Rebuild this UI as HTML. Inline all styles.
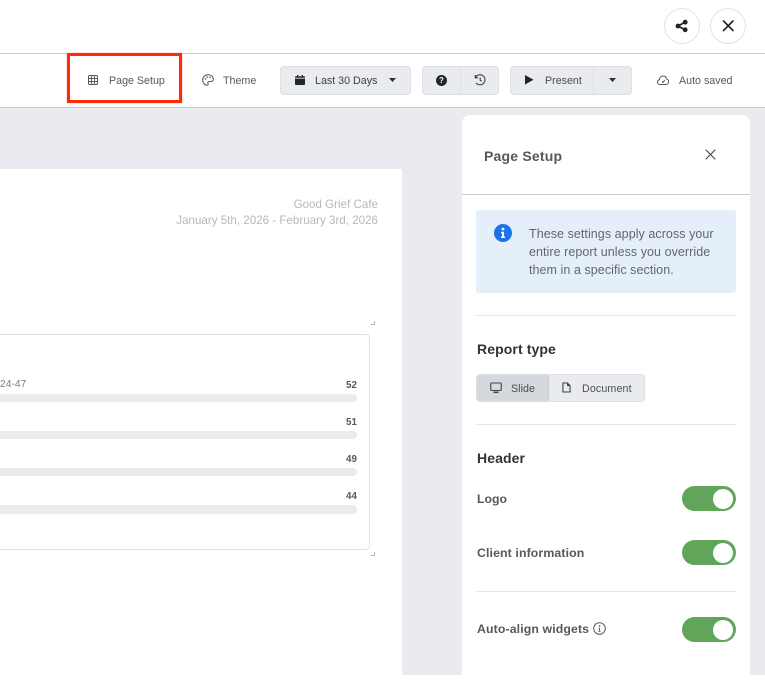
<!DOCTYPE html>
<html><head><meta charset="utf-8"><style>
html,body{margin:0;padding:0}
body{width:765px;height:675px;position:relative;overflow:hidden;background:#fff;font-family:"Liberation Sans",sans-serif;color:#55585c}
.a{position:absolute}
.t{position:absolute;white-space:nowrap;line-height:16px;font-size:10.700px;transform:translateY(-8px)}
.btn{position:absolute;top:66px;height:27px;background:#e9ebef;border:1px solid #dcdfe3;border-radius:4px}
.div{position:absolute;height:1px;background:#e4e6e9;left:476px;width:260px}
.tog{position:absolute;left:682px;width:54px;height:25px;border-radius:13px;background:#60a55a}
.tog:after{content:"";position:absolute;left:31px;top:3px;width:20px;height:20px;border-radius:50%;background:#fff}
.bar{position:absolute;left:0;width:357px;height:8.500px;background:#e9ebef;border-radius:0 5px 5px 0}
.b{font-weight:700}
svg{position:absolute;overflow:visible}
</style></head><body>
<div class="a" style="left:0;top:53px;width:765px;height:1px;background:#c9ccd0"></div>
<div class="a" style="left:0;top:107px;width:765px;height:1px;background:#c9ccd0"></div>
<div class="a" style="left:0;top:108px;width:765px;height:567px;background:#e9ebf0"></div>

<!-- top buttons -->
<div class="a" style="left:664px;top:8px;width:34px;height:34px;border:1px solid #e0e2e6;border-radius:50%"></div>
<div class="a" style="left:710px;top:8px;width:34px;height:34px;border:1px solid #e0e2e6;border-radius:50%"></div>
<svg style="left:675px;top:19px" width="14" height="14" viewBox="0 0 14 14"><path d="M10.500 3 3 7l7.500 4" fill="none" stroke="#1f2328" stroke-width="1.700"/><circle cx="10.200" cy="3.200" r="2.400" fill="#1f2328"/><circle cx="3" cy="7" r="2.400" fill="#1f2328"/><circle cx="10.200" cy="10.800" r="2.400" fill="#1f2328"/></svg>
<svg style="left:722px;top:20px" width="12" height="12" viewBox="0 0 12 12"><path d="M1.500 1 11 10.500M11 1 1.500 10.500" stroke="#1f2328" stroke-width="1.600" stroke-linecap="round"/></svg>

<!-- red box -->
<div class="a" style="left:67px;top:53px;width:109px;height:44px;border:3px solid #ff2a0a;box-shadow:0 0 1px #ff8a70"></div>

<!-- toolbar -->
<svg style="left:88px;top:75px" width="10" height="10" viewBox="0 0 10 10"><rect x=".5" y=".5" width="9" height="9" rx="1.200" fill="none" stroke="#55585c"/><path d="M3.500 .5v9M6.500 .5v9M.5 3.500h9M.5 6.500h9" stroke="#55585c" stroke-width=".9"/></svg>
<div class="t" style="left:109px;top:81px">Page Setup</div>
<svg style="left:202px;top:74px" width="12" height="12" viewBox="0 0 12 12"><path d="M6 .8C3 .8.7 3 .7 6s2.300 5.200 4.600 5.200c1.300 0 1-1.300.6-2-.4-.9.2-1.700 1.200-1.700h1.700c1.500 0 2.500-.8 2.500-2.200C11.300 2.500 9 .8 6 .8Z" fill="none" stroke="#55585c" stroke-width="1"/><circle cx="3.500" cy="5" r=".8" fill="#55585c"/><circle cx="5.300" cy="3" r=".8" fill="#55585c"/><circle cx="8" cy="3.400" r=".8" fill="#55585c"/></svg>
<div class="t" style="left:223px;top:81px">Theme</div>

<div class="btn" style="left:280px;width:129px"></div>
<svg style="left:295px;top:75px" width="10" height="10" viewBox="0 0 10 10"><path d="M0 3.600h10V9a1 1 0 0 1-1 1H1a1 1 0 0 1-1-1ZM1 1.300h8a1 1 0 0 1 1 1v.5H0v-.5a1 1 0 0 1 1-1ZM2 0h1.300v1.300H2ZM6.700 0H8v1.300H6.700Z" fill="#22262b"/></svg>
<div class="t" style="left:315px;top:81px;color:#3d4146">Last 30 Days</div>
<svg style="left:389px;top:78px" width="7" height="4" viewBox="0 0 7 4"><path d="M0 0h7L3.500 4Z" fill="#2a2e33"/></svg>

<div class="btn" style="left:422px;width:75px"></div>
<div class="a" style="left:460px;top:67px;width:1px;height:27px;background:#dcdfe3"></div>
<div class="a" style="left:436px;top:75px;width:11px;height:11px;border-radius:50%;background:#22262b;color:#fff;font-size:8px;line-height:11px;text-align:center;font-weight:700">?</div>
<svg style="left:474px;top:74px" width="12" height="12" viewBox="0 0 12 12"><path d="M1.500 3.500A5 5 0 1 1 2 8.800M1.200 1v2.800H4M6.200 3.500V6.300L8 7.300" fill="none" stroke="#3d4146" stroke-width="1.100"/></svg>

<div class="btn" style="left:510px;width:120px"></div>
<div class="a" style="left:593px;top:67px;width:1px;height:27px;background:#dcdfe3"></div>
<svg style="left:525px;top:75px" width="8.500" height="9.500" viewBox="0 0 9 10"><path d="M0 0 9 5 0 10Z" fill="#22262b"/></svg>
<div class="t" style="left:545px;top:81px;color:#4a4e53">Present</div>
<svg style="left:609px;top:78px" width="7" height="4" viewBox="0 0 7 4"><path d="M0 0h7L3.500 4Z" fill="#2a2e33"/></svg>

<svg style="left:657px;top:74px" width="12" height="12" viewBox="0 0 12 12"><path d="M3 10.500C1.500 10.500.5 9.500.5 8.200c0-1.200.8-2 1.800-2.300C2.600 3.700 4 2 6.200 2c2 0 3.300 1.300 3.600 3.200 1.100.3 1.800 1.300 1.800 2.500 0 1.500-1 2.800-2.600 2.800Z" fill="none" stroke="#55585c"/><path d="m5 7.500 1 1 1.800-2.500" fill="none" stroke="#55585c" stroke-width=".9"/></svg>
<div class="t" style="left:679px;top:81px">Auto saved</div>

<!-- page -->
<div class="a" style="left:0;top:169px;width:402px;height:506px;background:#fff"></div>
<div class="t" style="right:387px;top:205px;font-size:11.600px;color:#b4b8bd">Good Grief Cafe</div>
<div class="t" style="right:387px;top:221px;font-size:11.600px;color:#b4b8bd">January 5th, 2026 - February 3rd, 2026</div>

<div class="a" style="left:-5px;top:334px;width:373px;height:214px;border:1px solid #dfe1e5;border-radius:4px"></div>
<div class="a" style="left:371px;top:321px;width:3px;height:3px;border-right:1px solid #b0b4b9;border-bottom:1px solid #b0b4b9"></div>
<div class="a" style="left:371px;top:552px;width:3px;height:3px;border-right:1px solid #b0b4b9;border-bottom:1px solid #b0b4b9"></div>

<div class="t" style="left:0;top:385px;font-size:10.300px;color:#777b80">24-47</div>
<div class="t b" style="left:346px;top:386px;font-size:9.800px">52</div>
<div class="t b" style="left:346px;top:423px;font-size:9.800px">51</div>
<div class="t b" style="left:346px;top:460px;font-size:9.800px">49</div>
<div class="t b" style="left:346px;top:497px;font-size:9.800px">44</div>
<div class="bar" style="top:393.500px"></div>
<div class="bar" style="top:430.500px"></div>
<div class="bar" style="top:467.500px"></div>
<div class="bar" style="top:505px"></div>

<!-- panel -->
<div class="a" style="left:462px;top:115px;width:288px;height:570px;background:#fff;border-radius:8px"></div>
<div class="t b" style="left:484px;top:156px;font-size:14px;letter-spacing:.2px;color:#55585c">Page Setup</div>
<svg style="left:705px;top:149px" width="11" height="11" viewBox="0 0 11 11"><path d="M1 1 10 10M10 1 1 10" stroke="#4a4e53" stroke-width="1.200" stroke-linecap="round"/></svg>
<div class="a" style="left:462px;top:194px;width:288px;height:1px;background:#c9ccd0"></div>

<div class="a" style="left:476px;top:210px;width:260px;height:83px;background:#e5effa;border-radius:3px"></div>
<svg style="left:494px;top:224px" width="18" height="18" viewBox="0 0 18 18"><circle cx="9" cy="9" r="9" fill="#1a73e8"/><circle cx="9" cy="5" r="1.400" fill="#fff"/><path d="M7 7.800h3v4.700h1V14H7v-1.500h1V9.300H7Z" fill="#fff"/></svg>
<div class="t" style="left:529px;top:234px;font-size:12.500px;color:#63676c;letter-spacing:.06px">These settings apply across your</div>
<div class="t" style="left:529px;top:252px;font-size:12.500px;color:#63676c;letter-spacing:.06px">entire report unless you override</div>
<div class="t" style="left:529px;top:270px;font-size:12.500px;color:#63676c;letter-spacing:.06px">them in a specific section.</div>

<div class="div" style="top:315px"></div>
<div class="t b" style="left:477px;top:349px;font-size:14px;color:#2f3439;letter-spacing:.1px">Report type</div>

<div class="a" style="left:476px;top:374px;width:167px;height:26px;background:#e9ebef;border:1px solid #dcdfe3;border-radius:4px"></div>
<div class="a" style="left:477px;top:375px;width:71px;height:26px;background:#d5d9de;border-right:1px solid #c9cdd2;border-radius:3px 0 0 3px"></div>
<svg style="left:490px;top:382px" width="12" height="12" viewBox="0 0 12 12"><rect x=".8" y="1" width="10.400" height="7.500" rx="1" fill="none" stroke="#3d4146" stroke-width="1.100"/><path d="M3.500 10.300h5" stroke="#3d4146" stroke-width="1.500"/></svg>
<div class="t" style="left:511px;top:389px;color:#4a4e53;letter-spacing:.05px">Slide</div>
<svg style="left:562px;top:382px" width="9" height="11" viewBox="0 0 10 12"><path d="M1 1h5l3 3v7H1Z" fill="none" stroke="#3d4146" stroke-width="1.200"/><path d="M6 1v3h3" fill="#3d4146" stroke="#3d4146" stroke-width=".8"/></svg>
<div class="t" style="left:582px;top:389px;color:#4a4e53;letter-spacing:.12px">Document</div>

<div class="div" style="top:424px"></div>
<div class="t b" style="left:477px;top:458px;font-size:14px;color:#2f3439;letter-spacing:.1px">Header</div>

<div class="t b" style="left:477px;top:499px;font-size:12.300px">Logo</div>
<div class="tog" style="top:486px"></div>
<div class="t b" style="left:477px;top:553px;font-size:12.300px;letter-spacing:.12px">Client information</div>
<div class="tog" style="top:540px"></div>
<div class="div" style="top:591px"></div>
<div class="t b" style="left:477px;top:629px;font-size:12.300px;letter-spacing:.12px">Auto-align widgets</div>
<svg style="left:593px;top:622px" width="13" height="13" viewBox="0 0 13 13"><circle cx="6.500" cy="6.500" r="5.800" fill="none" stroke="#55585c" stroke-width="1"/><circle cx="6.500" cy="3.900" r=".8" fill="#55585c"/><path d="M5.500 5.700h1.400v3.200h.8v.8H5.300v-.8h.7V6.500h-.5Z" fill="#55585c"/></svg>
<div class="tog" style="top:617px"></div>
</body></html>
